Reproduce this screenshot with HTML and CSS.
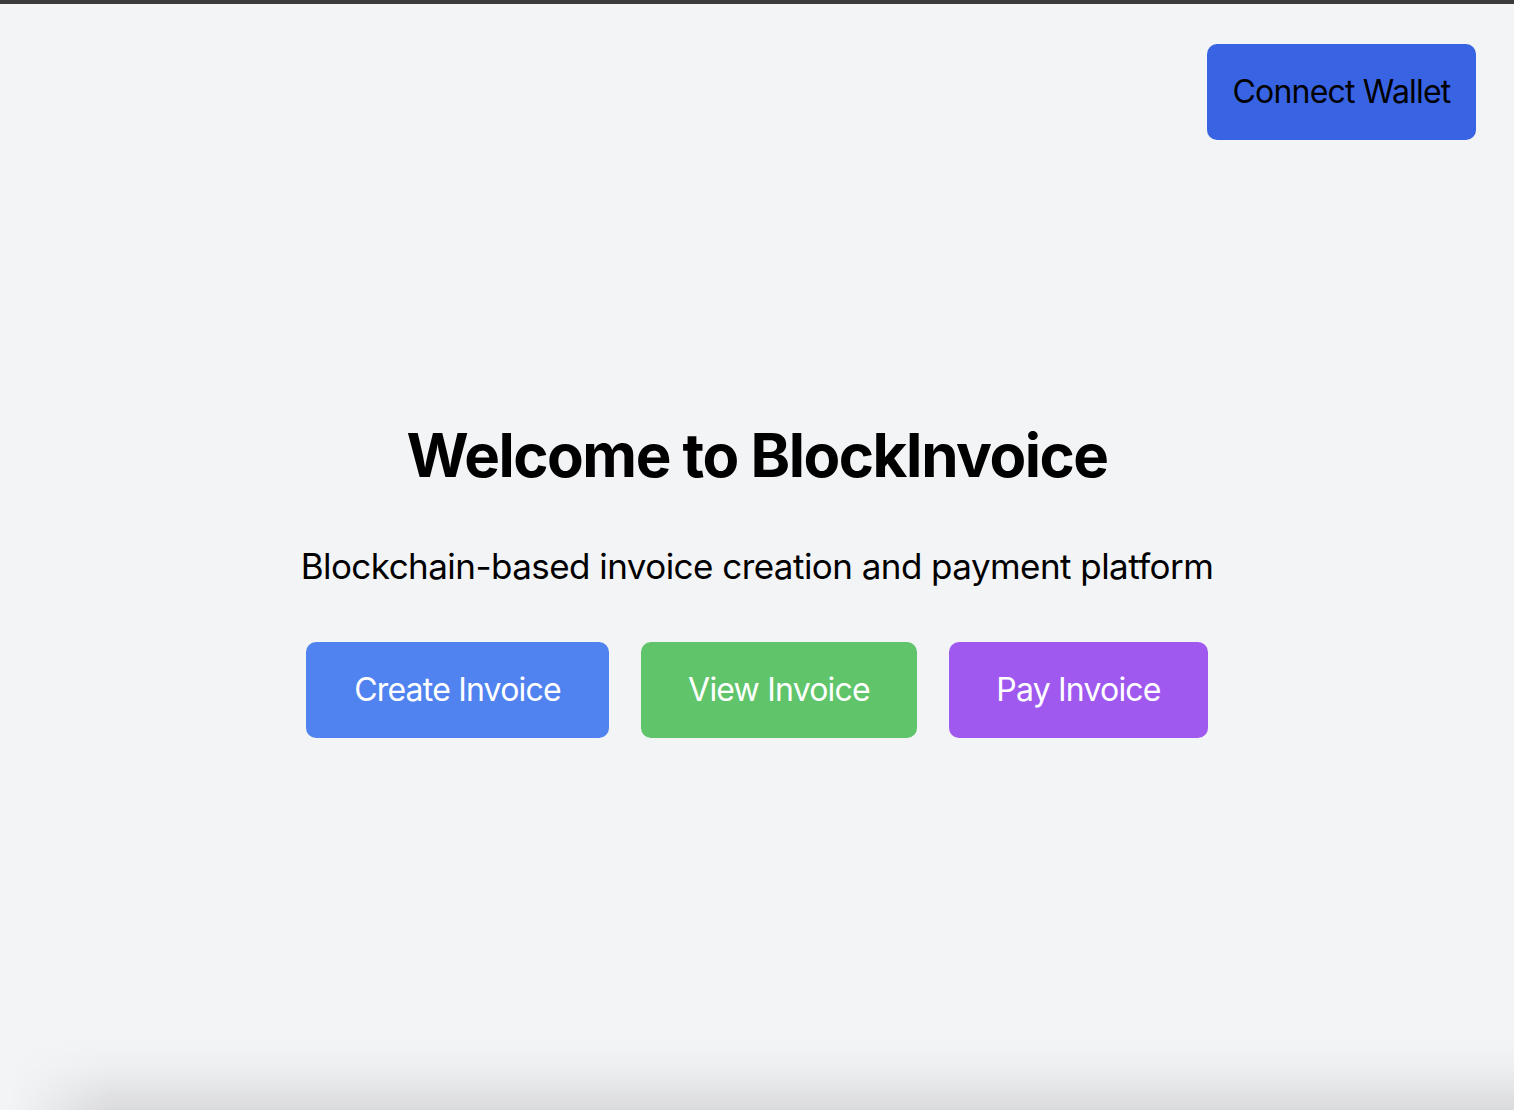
FILE: index.html
```html
<!DOCTYPE html>
<html lang="en">
<head>
<meta charset="utf-8">
<title>BlockInvoice</title>
<link rel="stylesheet" href="styles.css">
</head>
<body>
<div class="topline"></div>
<div class="page">
  <header class="header">
    <button class="btn btn-wallet">Connect Wallet</button>
  </header>
  <main class="hero">
    <h1 class="title">Welcome to BlockInvoice</h1>
    <p class="subtitle">Blockchain-based invoice creation and payment platform</p>
    <div class="actions">
      <button class="btn btn-action btn-create">Create Invoice</button>
      <button class="btn btn-action btn-view">View Invoice</button>
      <button class="btn btn-action btn-pay">Pay Invoice</button>
    </div>
  </main>
</div>
<div class="bottom-shadow"></div>
</body>
</html>
```

FILE: styles.css
```css
html, body {
  margin: 0;
  padding: 0;
  height: 100%;
  overflow: hidden;
}
body {
  background: #f3f4f6;
  font-family: Inter, "Noto Sans", sans-serif;
  color: #000;
  position: relative;
}
.topline {
  height: 4px;
  background: #3b3b3b;
}
.page {
  display: flex;
  flex-direction: column;
}
.header {
  display: flex;
  justify-content: flex-end;
  padding: 40px 38px 0 0;
}
.btn {
  border: none;
  font-family: inherit;
  font-size: 32px;
  line-height: 48px;
  letter-spacing: -0.8px;
  border-radius: 10px;
  white-space: nowrap;
  cursor: pointer;
}
.btn-wallet {
  background: #3864e4;
  color: #000;
  padding: 24px 0;
  width: 269px;
}
.hero {
  display: flex;
  flex-direction: column;
  align-items: center;
  padding-top: 279px;
}
.title {
  margin: 0;
  font-size: 60px;
  line-height: 72px;
  font-weight: 700;
  letter-spacing: -1.5px;
}
.subtitle {
  margin: 51px 0 0;
  font-size: 35px;
  line-height: 48px;
  letter-spacing: -0.55px;
}
.actions {
  display: flex;
  gap: 32px;
  margin-top: 52px;
}
.btn-action {
  color: #fff;
  padding: 24px 0;
}
.btn-create { background: #5083ef; width: 303px; }
.btn-view { background: #5fc46a; width: 276px; }
.btn-pay { background: #9f59ef; width: 259px; }
.bottom-shadow {
  position: absolute;
  left: 0;
  right: 0;
  bottom: 0;
  height: 72px;
  background: linear-gradient(to bottom, rgba(0, 0, 0, 0) 0%, rgba(0, 0, 0, 0.02) 40%, rgba(0, 0, 0, 0.065) 75%, rgba(0, 0, 0, 0.1) 100%);
  -webkit-mask-image: linear-gradient(to right, transparent 10px, #000 110px);
  mask-image: linear-gradient(to right, transparent 10px, #000 110px);
  pointer-events: none;
}
```
